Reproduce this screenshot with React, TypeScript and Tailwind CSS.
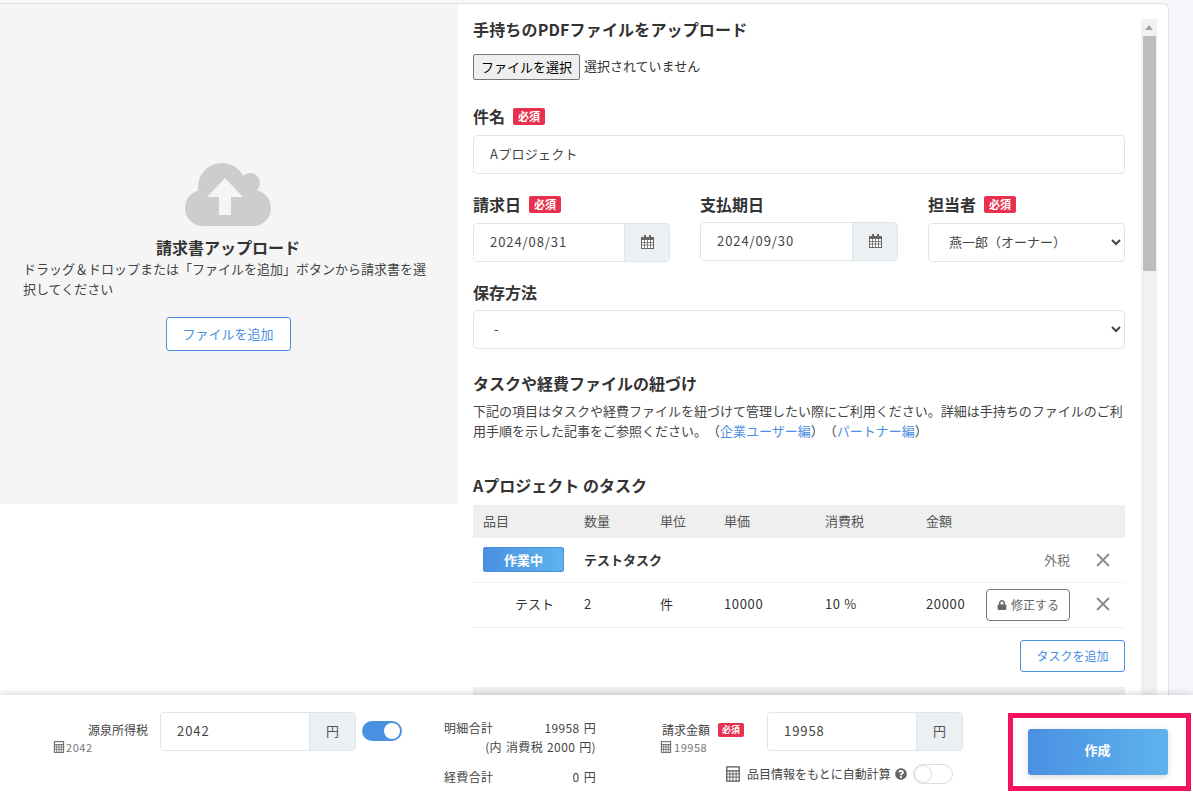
import React from "react";
import { FaLock, FaQuestionCircle } from "react-icons/fa";

function Required({ small }: { small?: boolean }) {
  return (
    <span
      className={
        small
          ? "ml-[8px] inline-flex h-[14px] w-[26px] items-center justify-center rounded-[2px] bg-[#e8304f] text-[9px] font-bold text-white"
          : "ml-[8px] inline-flex h-[17px] w-[32px] items-center justify-center rounded-[2px] bg-[#e8304f] text-[11px] font-bold text-white"
      }
    >
      必須
    </span>
  );
}

function Label({ children, required }: { children: React.ReactNode; required?: boolean }) {
  return (
    <div className="flex h-[24px] items-center pb-[2px] text-[16px] font-bold leading-none text-[#333]">
      {children}
      {required && <Required />}
    </div>
  );
}

function CalendarIcon() {
  return (
    <svg width="13" height="14" viewBox="0 0 13 14" className="text-[#666]">
      <rect x="0.5" y="2.5" width="12" height="11" fill="#fff" stroke="currentColor" />
      <rect x="0.5" y="2" width="12" height="3" fill="currentColor" />
      <rect x="3" y="0" width="2" height="4" fill="currentColor" />
      <rect x="8" y="0" width="2" height="4" fill="currentColor" />
      <path d="M0 7.5h13M0 10h13M3.5 5v8M6.5 5v8M9.5 5v8" stroke="currentColor" strokeWidth="0.8" />
    </svg>
  );
}

function CalcIcon({ size }: { size: number }) {
  return (
    <svg width={size} height={size} viewBox="0 0 16 18" className="shrink-0 text-[#555]">
      <rect x="1" y="1" width="14" height="16" fill="none" stroke="currentColor" strokeWidth="1.4" />
      <path d="M1 5.5h14" stroke="currentColor" strokeWidth="1.4" />
      <path d="M1 9h14M1 12.5h14M4.5 5.5V17M8 5.5V17M11.5 5.5V17" stroke="currentColor" strokeWidth="1" />
    </svg>
  );
}

function CloseIcon() {
  return (
    <svg width="16" height="16" viewBox="0 0 16 16" className="ml-[25px]">
      <path d="M2 2l12 12M14 2L2 14" stroke="#8a8a8a" strokeWidth="1.8" />
    </svg>
  );
}

function CloudIcon() {
  return (
    <svg width="86" height="63" viewBox="0 0 86 63">
      <g fill="#cdcdcd">
        <circle cx="37" cy="24" r="24" />
        <circle cx="65" cy="20" r="10" />
        <circle cx="18" cy="45" r="18" />
        <circle cx="68" cy="45" r="18" />
        <rect x="18" y="27" width="50" height="36" />
      </g>
      <path d="M40 15L58 34H46V51a1 1 0 0 1-1 1H35a1 1 0 0 1-1-1V34H22Z" fill="#f5f5f5" />
    </svg>
  );
}

function Toggle({ on }: { on?: boolean }) {
  return (
    <div
      className={
        on
          ? "flex h-[20px] w-[40px] shrink-0 items-center justify-end rounded-full bg-[#4a90e2] pr-[2px]"
          : "flex h-[20px] w-[40px] shrink-0 items-center rounded-full border border-[#ddd] bg-white"
      }
    >
      <div className={on ? "h-[16px] w-[16px] rounded-full bg-white" : "h-[18px] w-[18px] rounded-full border border-[#ddd] bg-white"} />
    </div>
  );
}

function AddonInput({ value, addon, addonWidth, className }: { value: string; addon: React.ReactNode; addonWidth: string; className: string }) {
  return (
    <div className={`flex h-[39px] overflow-hidden rounded-[4px] border border-[#dfe6ea] ${className}`}>
      <input readOnly value={value} className="h-full min-w-0 flex-1 bg-white pb-[2px] pl-[16px] text-[13px] tracking-[0.07em] text-[#444] outline-none" />
      <div className={`flex h-full items-center justify-center border-l border-[#dfe6ea] bg-[#edf0f2] pb-[2px] text-[13px] text-[#555] ${addonWidth}`}>
        {addon}
      </div>
    </div>
  );
}

const rowGrid = "grid grid-cols-[111px_76px_64px_101px_101px_60px_84px_1fr] items-center text-[13px] text-[#333]";

export default function App() {
  return (
    <div
      className="flex h-[792px] w-[1193px] flex-col overflow-hidden bg-[#f5f7fb]"
      style={{ fontFamily: '"Noto Sans CJK JP", "Noto Sans", sans-serif' }}
    >
      <div className="h-[695px] overflow-hidden pt-[3px]">
        <div className="flex h-[720px] w-[1169px] rounded-tr-[6px] border-t border-r border-[#dfe3e8] bg-white">
          {/* 請求書アップロード */}
          <div className="flex h-[500px] w-[458px] flex-col items-center bg-[#f5f5f5] pl-[22px] pr-[24px] pt-[159px]">
            <CloudIcon />
            <div className="mt-[9px] text-[16px] font-bold leading-[24px] text-[#333]">請求書アップロード</div>
            <p className="ml-[1px] w-[410px] self-start text-[13px] leading-[20px] text-[#444]">
              ドラッグ＆ドロップまたは「ファイルを追加」ボタンから請求書を選択してください
            </p>
            <button className="mt-[18px] h-[34px] w-[125px] rounded-[3px] border border-[#4a90e2] bg-white text-[13px] text-[#4a90e2]">
              ファイルを追加
            </button>
          </div>

          {/* フォーム */}
          <div className="w-[652px] ml-[15px] shrink-0 pt-[14px]">
            <div className="flex h-[24px] items-center pb-[2px] text-[16px] font-bold tracking-[0.01em] text-[#333]">手持ちのPDFファイルをアップロード</div>
            <div className="mt-[12px] flex items-center">
              <button className="h-[26px] w-[107px] rounded-[2px] border border-[#767676] bg-[#efefef] pb-[1px] text-[13px] text-black">
                ファイルを選択
              </button>
              <span className="ml-[4px] pb-[2px] text-[13px] text-[#333]">選択されていません</span>
            </div>

            <div className="mt-[25px]">
              <Label required>件名</Label>
            </div>
            <input readOnly value="Aプロジェクト" className="mt-[6px] h-[39px] w-full rounded-[4px] border border-[#dfe6ea] pb-[2px] pl-[16px] text-[13px] tracking-[0.02em] text-[#444] outline-none" />

            <div className="mt-[19px] grid grid-cols-[197px_198px_197px] gap-x-[30px]">
              <div>
                <Label required>請求日</Label>
                <AddonInput value="2024/08/31" addon={<CalendarIcon />} addonWidth="w-[45px]" className="mt-[6px]" />
              </div>
              <div>
                <Label>支払期日</Label>
                <AddonInput value="2024/09/30" addon={<CalendarIcon />} addonWidth="w-[45px]" className="mt-[5px]" />
              </div>
              <div>
                <Label required>担当者</Label>
                <select className="mt-[6px] h-[39px] w-full rounded-[4px] border border-[#dfe6ea] bg-white pb-[2px] pl-[16px] text-[13px] text-[#444] outline-none">
                  <option>燕一郎（オーナー）</option>
                </select>
              </div>
            </div>

            <div className="mt-[19px]">
              <Label>保存方法</Label>
            </div>
            <select className="mt-[5px] h-[39px] w-full rounded-[4px] border border-[#dfe6ea] bg-white pb-[2px] pl-[16px] text-[13px] text-[#444] outline-none">
              <option>-</option>
            </select>

            <div className="mt-[23px]">
              <Label>タスクや経費ファイルの紐づけ</Label>
            </div>
            <div className="mt-[5px] whitespace-nowrap text-[13px] leading-[20px] text-[#444] [text-spacing-trim:space-all]">
              <div>下記の項目はタスクや経費ファイルを紐づけて管理したい際にご利用ください。詳細は手持ちのファイルのご利</div>
              <div className="flex">
                <span>用手順を示した記事をご参照ください。</span>
                <span>（</span>
                <span className="text-[#4a90e2]">企業ユーザー編</span>
                <span>）</span>
                <span>（</span>
                <span className="text-[#4a90e2]">パートナー編</span>
                <span>）</span>
              </div>
            </div>

            <div className="mt-[33px]">
              <Label>Aプロジェクト のタスク</Label>
            </div>

            <div className={`${rowGrid} mt-[7px] h-[33px] bg-[#efefef] pb-[1px] text-[12px] text-[#555]`}>
              <div className="pl-[10px]">品目</div>
              <div>数量</div>
              <div>単位</div>
              <div>単価</div>
              <div>消費税</div>
              <div>金額</div>
            </div>
            <div className={`${rowGrid} h-[45px] border-b border-[#eef0f3] pb-[1px]`}>
              <div className="pl-[10px]">
                <div className="flex h-[25px] w-[81px] items-center justify-center rounded-[2px] border border-[#4a90e2] bg-gradient-to-r from-[#4a90e2] to-[#5fb3ec] text-[13px] font-bold text-white">
                  作業中
                </div>
              </div>
              <div className="col-span-5 text-[13px] font-bold">テストタスク</div>
              <div className="text-right text-[13px] text-[#777]">外税</div>
              <CloseIcon />
            </div>
            <div className={`${rowGrid} h-[45px] border-b border-[#eef0f3] pb-[3px]`}>
              <div className="pl-[42px]">テスト</div>
              <div>2</div>
              <div>件</div>
              <div className="tracking-[0.05em]">10000</div>
              <div className="tracking-[0.05em]">10 %</div>
              <div className="tracking-[0.05em]">20000</div>
              <button className="mt-[3px] flex h-[32px] w-[84px] items-center justify-center gap-[4px] rounded-[4px] border border-[#777] bg-white text-[12px] text-[#666]">
                <FaLock size={10} />
                修正する
              </button>
              <CloseIcon />
            </div>
            <div className="mt-[12px] flex justify-end">
              <button className="h-[32px] w-[105px] rounded-[3px] border border-[#4a90e2] bg-white text-[12px] text-[#4a90e2]">
                タスクを追加
              </button>
            </div>
            <div className="mt-[15px] h-[33px] bg-[#efefef]" />
          </div>

          {/* スクロールバー */}
          <div className="ml-[16px] mt-[15px] flex h-[700px] w-[16px] flex-col items-center bg-[#f1f1f1]">
            <div className="flex h-[17px] w-full items-center justify-center">
              <div className="h-0 w-0 border-x-[4px] border-b-[5px] border-x-transparent border-b-[#a3a3a3]" />
            </div>
            <div className="h-[235px] w-[13px] bg-[#bdbdbd]" />
          </div>
        </div>
      </div>

      {/* 下部バー */}
      <div className="relative z-10 flex h-[97px] bg-white shadow-[0_-2px_6px_rgba(0,0,0,0.14)]">
        <div className="ml-[53px] mt-[26px] w-[95px] text-right">
          <div className="text-[12px] leading-[18px] text-[#444]">源泉所得税</div>
          <div className="mt-[1px] flex items-center text-[11px] leading-[14px] tracking-[0.05em] text-[#777]">
            <CalcIcon size={12} />
            <span className="ml-[1px]">2042</span>
          </div>
        </div>
        <AddonInput value="2042" addon="円" addonWidth="w-[46px]" className="ml-[12px] mt-[17px] w-[196px]" />
        <div className="ml-[6px] mt-[26px]">
          <Toggle on />
        </div>

        <div className="ml-[42px] mt-[23px] w-[152px] text-[12px] leading-[19px] tracking-[0.03em] text-[#444] [word-spacing:1px]">
          <div className="flex justify-between">
            <span>明細合計</span>
            <span>19958 円</span>
          </div>
          <div className="text-right">(内 消費税 2000 円)</div>
          <div className="mt-[11px] flex justify-between">
            <span>経費合計</span>
            <span>0 円</span>
          </div>
        </div>

        <div className="ml-[64px] mt-[26px] w-[105px]">
          <div className="ml-[2px] flex items-center text-[12px] leading-[18px] text-[#444]">
            請求金額
            <Required small />
          </div>
          <div className="mt-[1px] flex items-center text-[11px] leading-[14px] tracking-[0.05em] text-[#777]">
            <CalcIcon size={12} />
            <span className="ml-[2px]">19958</span>
          </div>
        </div>

        <div className="-ml-[40px] w-[238px]">
          <AddonInput value="19958" addon="円" addonWidth="w-[46px]" className="ml-[42px] mt-[17px] w-[196px]" />
          <div className="mt-[13px] flex items-center whitespace-nowrap text-[12px] text-[#444]">
            <CalcIcon size={16} />
            <span className="ml-[6px]">品目情報をもとに自動計算</span>
            <FaQuestionCircle size={12} className="ml-[4px] text-[#666]" />
            <span className="ml-[6px]">
              <Toggle />
            </span>
          </div>
        </div>

        <div className="ml-[45px] mt-[18px] flex h-[78px] w-[183px] items-center justify-center border-[5px] border-[#f5135f] pr-[4px]">
          <button className="h-[46px] w-[140px] rounded-[3px] bg-gradient-to-r from-[#4a90e2] to-[#5fb3ec] pb-[5px] text-[13px] font-bold text-white shadow-[0_2px_6px_rgba(0,0,0,0.15)]">
            作成
          </button>
        </div>
      </div>
    </div>
  );
}
